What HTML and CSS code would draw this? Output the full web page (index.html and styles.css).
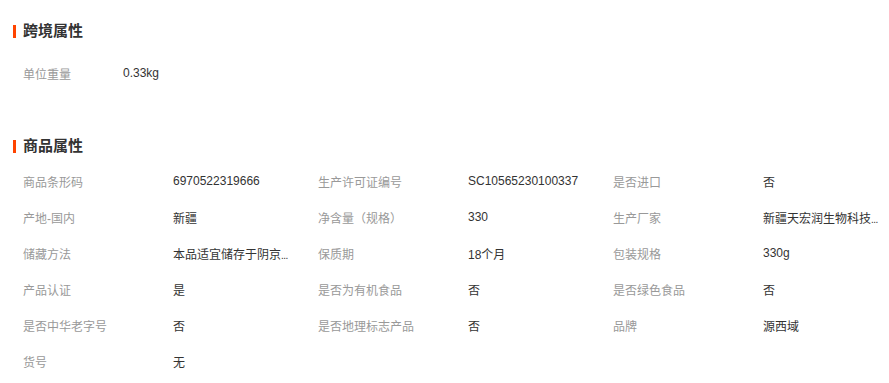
FILE: index.html
```html
<!DOCTYPE html>
<html lang="zh-CN">
<head>
<meta charset="utf-8">
<title>属性</title>
<link rel="stylesheet" href="styles.css">
</head>
<body>
<div class="page">
  <section class="section section-first">
    <h2 class="section-title">跨境属性</h2>
    <div class="attrs attrs-single">
      <div class="attr attr-narrow"><span class="attr-label">单位重量</span><span class="attr-value">0.33kg</span></div>
    </div>
  </section>
  <section class="section section-second">
    <h2 class="section-title">商品属性</h2>
    <div class="attrs attrs-grid">
      <div class="attr"><span class="attr-label">商品条形码</span><span class="attr-value">6970522319666</span></div>
      <div class="attr"><span class="attr-label">生产许可证编号</span><span class="attr-value">SC10565230100337</span></div>
      <div class="attr"><span class="attr-label">是否进口</span><span class="attr-value">否</span></div>
      <div class="attr"><span class="attr-label">产地-国内</span><span class="attr-value">新疆</span></div>
      <div class="attr"><span class="attr-label">净含量（规格）</span><span class="attr-value">330</span></div>
      <div class="attr"><span class="attr-label">生产厂家</span><span class="attr-value">新疆天宏润生物科技<span class="dots">...</span></span></div>
      <div class="attr"><span class="attr-label">储藏方法</span><span class="attr-value">本品适宜储存于阴京<span class="dots">...</span></span></div>
      <div class="attr"><span class="attr-label">保质期</span><span class="attr-value">18个月</span></div>
      <div class="attr"><span class="attr-label">包装规格</span><span class="attr-value">330g</span></div>
      <div class="attr"><span class="attr-label">产品认证</span><span class="attr-value">是</span></div>
      <div class="attr"><span class="attr-label">是否为有机食品</span><span class="attr-value">否</span></div>
      <div class="attr"><span class="attr-label">是否绿色食品</span><span class="attr-value">否</span></div>
      <div class="attr"><span class="attr-label">是否中华老字号</span><span class="attr-value">否</span></div>
      <div class="attr"><span class="attr-label">是否地理标志产品</span><span class="attr-value">否</span></div>
      <div class="attr"><span class="attr-label">品牌</span><span class="attr-value">源西域</span></div>
      <div class="attr"><span class="attr-label">货号</span><span class="attr-value">无</span></div>
    </div>
  </section>
</div>
</body>
</html>
```
FILE: styles.css
```css
html, body {
  margin: 0;
  padding: 0;
  background: #fff;
}
body {
  font-family: "Liberation Sans", "Noto Sans CJK SC", sans-serif;
  font-size: 12px;
  color: #333;
}
.page {
  padding: 21px 0 0 13px;
}
.section-title {
  margin: 0;
  height: 20px;
  display: flex;
  align-items: center;
  font-size: 15px;
  font-weight: bold;
  color: #333;
  line-height: 20px;
}
.section-title::before {
  content: "";
  display: block;
  width: 3px;
  height: 13px;
  background: #ff4400;
  margin-right: 7px;
}
.section-first .attrs {
  padding-top: 14px;
}
.section-second {
  margin-top: 45px;
}
.section-second .attrs {
  padding-top: 7px;
}
.attrs-grid {
  display: grid;
  grid-template-columns: repeat(3, 295px);
}
.attr {
  display: flex;
  align-items: center;
  height: 36px;
  padding-left: 10px;
}
.attr-label {
  width: 150px;
  flex: none;
  color: #999;
  white-space: nowrap;
}
.attr-narrow .attr-label {
  width: 100px;
}
.attr-value {
  white-space: nowrap;
  color: #333;
}
.dots {
  font-size: 10px;
  letter-spacing: -0.5px;
}
```
